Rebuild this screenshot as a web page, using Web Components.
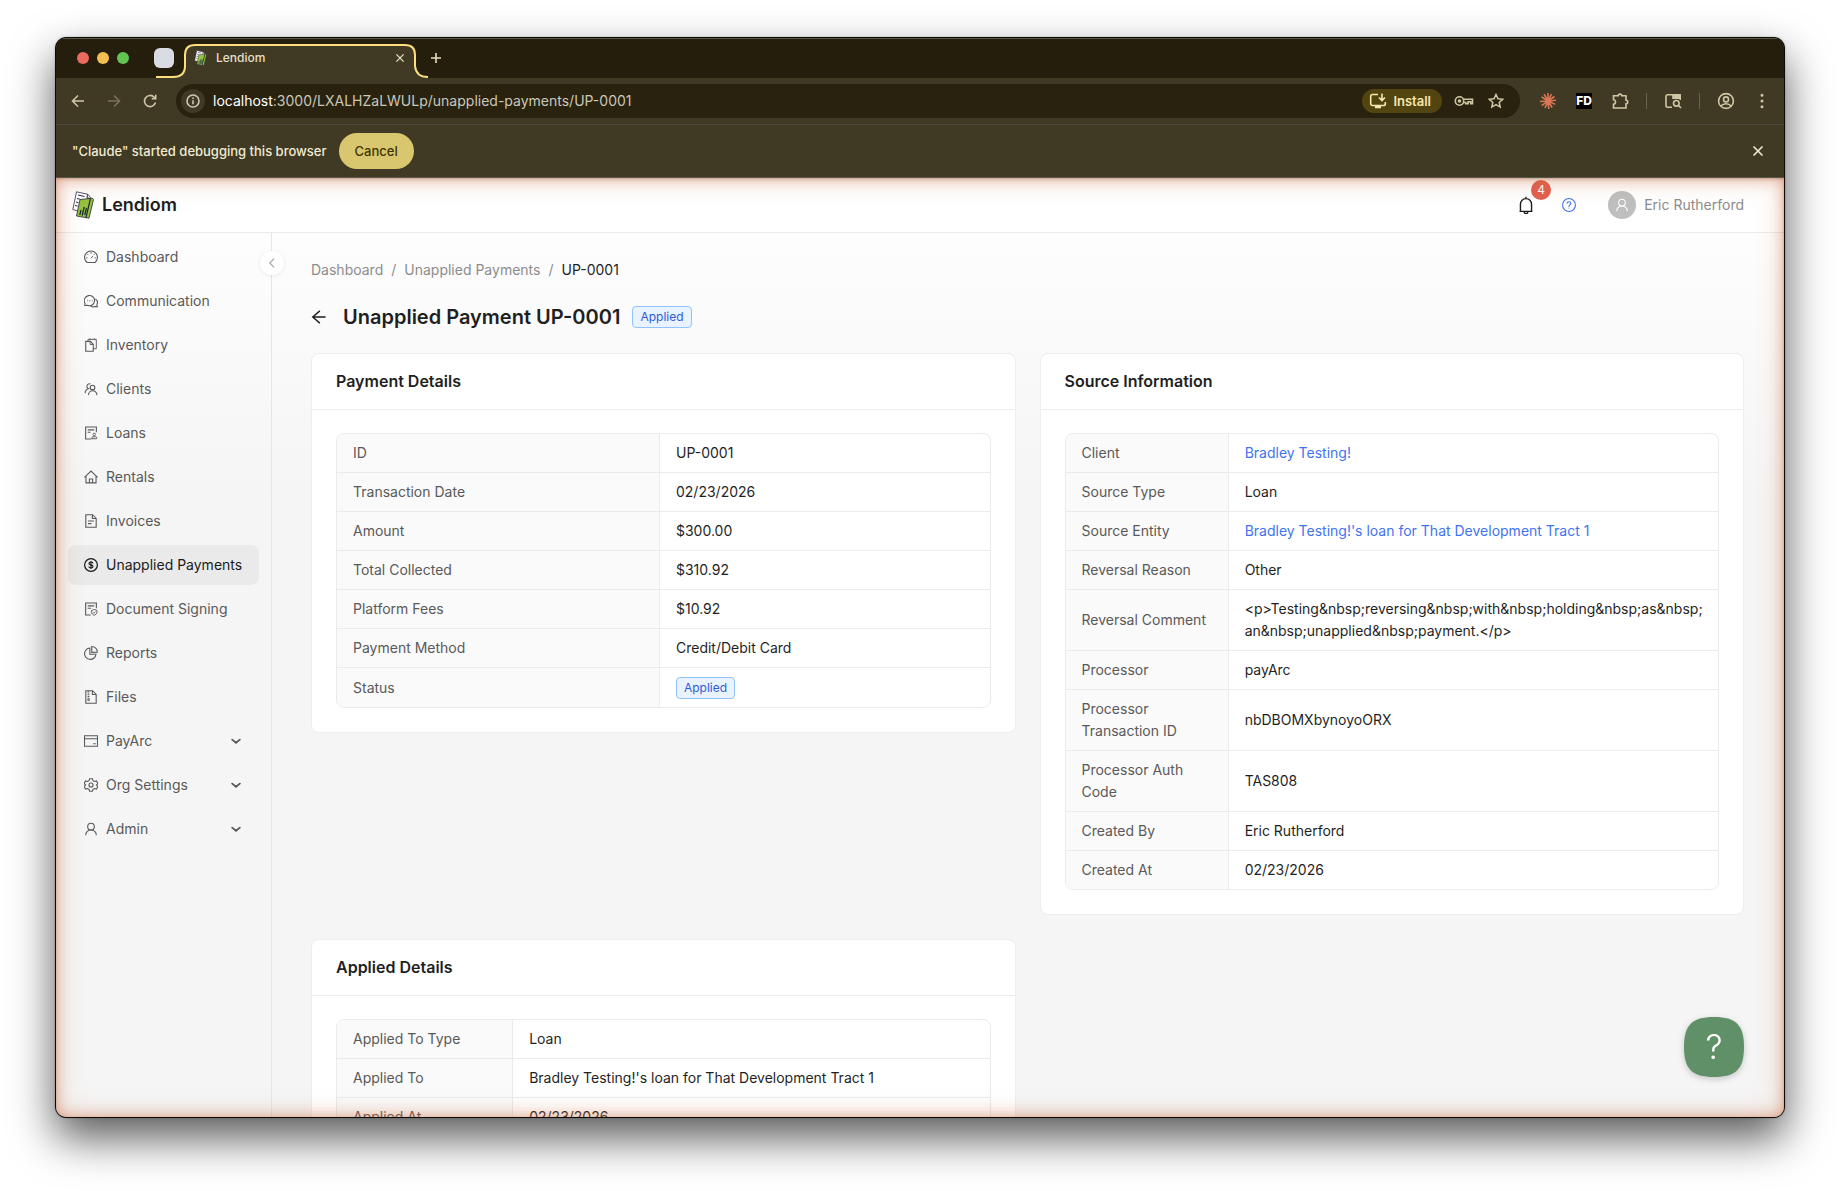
<!DOCTYPE html>
<html lang="en">
<head>
<meta charset="utf-8">
<title>Lendiom</title>
<style>
    body {
        margin: 0;
        background: #fff;
        font-family: Inter, "Liberation Sans", sans-serif;
        font-size: 14px;
        line-height: 22px;
        color: #1f1f1f;
    }
</style>
</head>
<body>
<browser-window>
    <tab-strip slot="chrome"></tab-strip>
    <nav-bar slot="chrome"></nav-bar>
    <info-bar slot="chrome">"Claude" started debugging this browser</info-bar>

    <app-header user="Eric Rutherford" count="4"></app-header>
    <app-layout>
        <side-nav slot="nav">
            <nav-item icon="dashboard">Dashboard</nav-item>
            <nav-item icon="comment">Communication</nav-item>
            <nav-item icon="inventory">Inventory</nav-item>
            <nav-item icon="team">Clients</nav-item>
            <nav-item icon="loans">Loans</nav-item>
            <nav-item icon="home">Rentals</nav-item>
            <nav-item icon="file">Invoices</nav-item>
            <nav-item icon="dollar" active>Unapplied Payments</nav-item>
            <nav-item icon="signing">Document Signing</nav-item>
            <nav-item icon="pie">Reports</nav-item>
            <nav-item icon="zip">Files</nav-item>
            <nav-item icon="card" expandable>PayArc</nav-item>
            <nav-item icon="setting" expandable>Org Settings</nav-item>
            <nav-item icon="user" expandable>Admin</nav-item>
        </side-nav>

        <page-heading>
            <a slot="crumb" href="#dashboard">Dashboard</a>
            <a slot="parent" href="#unapplied-payments">Unapplied Payments</a>
            <span slot="current">UP-0001</span>
            Unapplied Payment UP-0001
            <status-tag slot="tag">Applied</status-tag>
        </page-heading>

        <card-grid>
            <detail-card heading="Payment Details">
                <detail-table style="--label-width: 49.5%">
                    <div data-label="ID">UP-0001</div>
                    <div data-label="Transaction Date">02/23/2026</div>
                    <div data-label="Amount">$300.00</div>
                    <div data-label="Total Collected">$310.92</div>
                    <div data-label="Platform Fees">$10.92</div>
                    <div data-label="Payment Method">Credit/Debit Card</div>
                    <div data-label="Status"><status-tag>Applied</status-tag></div>
                </detail-table>
            </detail-card>
            <detail-card heading="Source Information">
                <detail-table style="--label-width: 25%">
                    <div data-label="Client"><text-link>Bradley Testing!</text-link></div>
                    <div data-label="Source Type">Loan</div>
                    <div data-label="Source Entity"><text-link>Bradley Testing!'s loan for That Development Tract 1</text-link></div>
                    <div data-label="Reversal Reason">Other</div>
                    <div data-label="Reversal Comment">&lt;p&gt;Testing&amp;nbsp;reversing&amp;nbsp;with&amp;nbsp;holding&amp;nbsp;as&amp;nbsp;<wbr>an&amp;nbsp;unapplied&amp;nbsp;payment.&lt;/p&gt;</div>
                    <div data-label="Processor">payArc</div>
                    <div data-label="Processor Transaction ID">nbDBOMXbynoyoORX</div>
                    <div data-label="Processor Auth Code">TAS808</div>
                    <div data-label="Created By">Eric Rutherford</div>
                    <div data-label="Created At">02/23/2026</div>
                </detail-table>
            </detail-card>
            <detail-card heading="Applied Details">
                <detail-table style="--label-width: 27%">
                    <div data-label="Applied To Type">Loan</div>
                    <div data-label="Applied To">Bradley Testing!'s loan for That Development Tract 1</div>
                    <div data-label="Applied At">02/23/2026</div>
                </detail-table>
            </detail-card>
        </card-grid>
    </app-layout>
    <help-button slot="overlay"></help-button>
</browser-window>

<script>
// Outline icons share a 1024 grid and are stroked with the current colour.
const LINE_ICONS = {
    dashboard: '<path d="M262 862A410 410 0 1 1 762 862Z"/><path d="M500 600L650 440M512 200v110M190 570h90M744 570h90M286 332l60 60M738 332l-50 50" stroke-width="60"/>',
    comment: '<path d="M110 800l20-140a330 330 0 1 1 150 130z"/><path d="M790 380a270 270 0 0 1 100 350l24 150-150-20a280 280 0 0 1-270-20"/><path d="M270 500h56M412 500h56M554 500h56" stroke-width="64"/>',
    inventory: '<path d="M176 280h290l190 190v440H176z"/><path d="M450 290v190h200" stroke-width="56"/><path d="M320 270V150h530v600H670M450 90v110M720 90v110" stroke-width="60"/>',
    team: '<circle cx="610" cy="420" r="150"/><path d="M350 900c0-150 110-280 260-280s270 130 290 280M470 190A160 160 0 1 0 350 490C220 530 140 640 136 780"/>',
    loans: '<path d="M540 900H168V128h688v330M300 310h420M300 460h180"/><circle cx="720" cy="600" r="80" stroke-width="56"/><path d="M570 880v-70q0-60 60-60h180q60 0 60 60v70z" stroke-width="60"/>',
    home: '<path d="M90 540L512 130l422 410M190 460v430h644V460M410 890V640h204v250"/>',
    file: '<path d="M180 110h430l234 234v570H180zM600 120v230h230M320 510h380M320 680h220"/>',
    dollar: '<circle cx="512" cy="512" r="408" stroke-width="80"/><path d="M640 410c-10-60-60-90-130-90-80 0-130 40-130 95 0 130 260 50 260 190 0 60-50 100-130 100s-135-35-140-100M510 250v520" stroke-width="72"/>',
    signing: '<path d="M500 900H168V128h688v330M300 310h420M300 460h220"/><path d="M720 540l170 60v120q0 120-170 200-170-80-170-200V600z" stroke-width="60"/><path d="M640 720l60 60 110-110" stroke-width="52"/>',
    pie: '<path d="M440 190A366 366 0 1 0 830 590H440z"/><path d="M560 100a360 360 0 0 1 360 360l-360 10z"/>',
    zip: '<path d="M180 110h430l234 234v570H180zM600 120v230h230"/><path d="M350 120v500" stroke-width="110" stroke-dasharray="60 50"/><path d="M310 640h100v110H310z" stroke-width="50"/>',
    card: '<path d="M96 180h832v664H96zM96 370h832M650 690h160"/>',
    setting: '<path d="M420 110h184l34 126 96 54 126-34 92 158-92 98 92 98-92 158-126-34-96 54-34 126H420l-34-126-96-54-126 34-92-158 92-98-92-98 92-158 126 34 96-54z"/><circle cx="512" cy="512" r="130"/>',
    user: '<circle cx="512" cy="360" r="212"/><path d="M172 905c0-190 150-333 340-333s340 143 340 333"/>',
    bell: '<path d="M190 830h644M236 820V470a276 276 0 0 1 552 0v350M512 100v90M420 850a92 92 0 0 0 184 0"/>',
    question: '<circle cx="512" cy="512" r="412"/><path d="M392 420c0-70 50-116 120-116s120 46 120 110c0 90-120 90-120 190v30M512 690v50"/>',
    back: '<path d="M880 512H150M560 170L160 512l400 342" stroke-width="78"/>',
    left: '<path d="M650 230L370 512l280 282" stroke-width="78"/>',
    down: '<path d="M170 390l342 280 342-280" stroke-width="160" stroke-linecap="round"/>'
};

// Toolbar icons use a 20 grid.
const CHROME_ICONS = {
    'arrow-left': '<path d="M16 10H5M10 4.500L4.500 10l5.500 5.500"/>',
    'arrow-right': '<path d="M4 10h11M10 4.500L15.500 10 10 15.500"/>',
    reload: '<path d="M15.500 11.500A5.600 5.600 0 1 1 14.200 6.200L15.500 7.500M15.700 3.800v4h-4"/>',
    info: '<circle cx="10" cy="10" r="6"/><path d="M10 9.300v4M10 6.500v1.400"/>',
    close: '<path d="M5.500 5.500l9 9M14.500 5.500l-9 9"/>',
    plus: '<path d="M10 5v10M5 10h10"/>',
    install: '<path d="M10 3.500H4.500a1.800 1.800 0 0 0-1.800 1.800v7.400a1.800 1.800 0 0 0 1.800 1.800h11a1.800 1.800 0 0 0 1.800-1.800V11M14 2.500v6.500M11 6.500l3 3 3-3"/><path d="M7 16h6" stroke-width="2.400"/>',
    key: '<circle cx="5.500" cy="10" r="4.200"/><circle cx="5.500" cy="10" r="1" fill="currentColor"/><path d="M9.500 8.200h9v4.600h-1.800v-2h-2.600v2h-2.200v-1.300H9.500"/>',
    star: '<path d="M10 3.500l2 4.300 4.700.5-3.500 3.200 1 4.600-4.200-2.400-4.200 2.400 1-4.600-3.500-3.200 4.700-.5z" stroke-width="1.500"/>',
    puzzle: '<path d="M3.500 4.800h4.700c0-2.300 3.600-2.300 3.600 0H16v4.400c2.300 0 2.300 3.600 0 3.600V17H3.500v-3.700c2.700 0 2.700-4.500 0-4.500z"/>',
    tabsearch: '<path d="M9 16.200H4.500a1.500 1.500 0 0 1-1.500-1.500V5.300a1.500 1.500 0 0 1 1.500-1.500h12.700V9M10 3.800v3.400h7"/><path d="M11 4h6v3h-6z" fill="currentColor"/><circle cx="13.300" cy="12.300" r="2.800"/><path d="M15.400 14.400l2.600 2.600"/>',
    profile: '<circle cx="10" cy="10" r="7.400"/><circle cx="10" cy="8.400" r="2.500"/><path d="M5 15c2.200-3 7.800-3 10 0"/>',
    dots: '<path d="M10 4.200v.01M10 10v.01M10 15.800v.01" stroke-width="3" stroke-linecap="round"/>',
    burst: '<path d="M10 10V2M10 10l3.500-7M10 10l6.500-4.500M10 10l8-.8M10 10l7.200 3.400M10 10l4.200 6.500M10 10l.8 8M10 10l-3 7M10 10l-6.300 4.600M10 10l-8 .5M10 10L3.500 5.800M10 10L6 3.200"/>'
};

class AppIcon extends HTMLElement {
    connectedCallback() {
        const name = this.getAttribute('name');
        const line = name in LINE_ICONS;
        this.attachShadow({ mode: 'open' }).innerHTML = `
            <style>
                :host { display: inline-flex; flex: none; width: 14px; height: 14px; }
                svg { width: 100%; height: 100%; fill: none; stroke: currentColor; }
            </style>
            <svg viewBox="${line ? '64 64 896 896' : '0 0 20 20'}" stroke-width="${line ? 70 : 1.6}" aria-hidden="true">
                ${line ? LINE_ICONS[name] : CHROME_ICONS[name]}
            </svg>`;
    }
}

class LendiomLogo extends HTMLElement {
    connectedCallback() {
        this.attachShadow({ mode: 'open' }).innerHTML = `
            <style>
                :host { display: inline-flex; flex: none; width: 22px; height: 28px; }
                svg { width: 100%; height: 100%; }
            </style>
            <svg viewBox="0 0 22 28" aria-hidden="true" stroke-linejoin="round">
                <path d="M4.500 0.800L16 3.300l2.500 3.400-3.500 15.500L0.800 18.600z" fill="#fff" stroke="#2b2a4c" stroke-width="0.800"/>
                <path d="M6 4l6.500 1.500M5 7.500l3 .7M4 11l2.500.6M3 14.500l2.500.6M15.500 3.500L15 7l4 .5" fill="none" stroke="#2b2a4c"/>
                <path d="M8 8.500L20.500 7.200l1 1.500-4.500 18.500L4.500 25z" fill="#96c23d" stroke="#1f2a3c" stroke-width="0.800"/>
                <path d="M17.800 7.600l1.200.2-4.400 18.900-1.200-.3z" fill="#1f2a3c"/>
                <path d="M9 19l-1.200 5M12.200 16l-2 8.500M14.500 17l-1.800 7" stroke="#1f2a3c" stroke-width="1.300"/>
            </svg>`;
    }
}

class BrowserWindow extends HTMLElement {
    connectedCallback() {
        this.attachShadow({ mode: 'open' }).innerHTML = `
            <style>
                :host {
                    display: flex;
                    box-sizing: border-box;
                    height: 100vh;
                    padding: 37px 55px 73px;
                    overflow: hidden;
                }
                .frame {
                    flex: 1;
                    min-width: 0;
                    display: flex;
                    flex-direction: column;
                    border: 1px solid #0c0b08;
                    border-radius: 11px;
                    overflow: hidden;
                    box-shadow: 0 20px 44px rgba(0,0,0,0.65), 0 0 2px rgba(0,0,0,0.3);
                    background: #403a25;
                }
                .page {
                    position: relative;
                    flex: 1;
                    min-height: 0;
                    display: flex;
                    flex-direction: column;
                    background: linear-gradient(#fff, #fdfdfd 60px, #f5f5f5 320px);
                }
                /* glow around the page while it is being debugged */
                .glow {
                    position: absolute;
                    inset: 0;
                    pointer-events: none;
                    border-radius: 0 0 10px 10px;
                    box-shadow: inset 0 0 15px rgba(205,105,60,0.55), inset 0 0 30px rgba(205,105,60,0.2), inset 0 1px 3px rgba(60,40,30,0.3);
                }
            </style>
            <div class="frame">
                <slot name="chrome"></slot>
                <div class="page">
                    <slot></slot>
                    <div class="glow"></div>
                    <slot name="overlay"></slot>
                </div>
            </div>`;
    }
}

class TabStrip extends HTMLElement {
    connectedCallback() {
        this.attachShadow({ mode: 'open' }).innerHTML = `
            <style>
                :host {
                    display: flex;
                    align-items: center;
                    height: 40px;
                    padding-left: 21px;
                    background: #251e0c;
                    color: #e6dfc4;
                    box-shadow: inset 0 1px #5a564a;
                }
                .lights { display: flex; gap: 8px; }
                .lights i { width: 12px; height: 12px; border-radius: 50%; background: #ed6a5e; }
                .lights i:nth-child(2) { background: #f4bf4f; }
                .lights i:nth-child(3) { background: #61c554; }
                .pinned { width: 20px; height: 20px; margin-left: 25px; border-radius: 6px; background: #dadce4; }
                .tab {
                    position: relative;
                    display: flex;
                    align-items: center;
                    box-sizing: border-box;
                    width: 232px;
                    height: 40px;
                    margin-left: 10px;
                    padding: 0 8px 0 10px;
                    font-size: 12px;
                }
                .outline { position: absolute; left: -28px; top: 6px; width: 272px; height: 34px; }
                .tab > :not(.outline) { position: relative; }
                lendiom-logo { width: 13px; height: 16px; }
                .title { flex: 1; margin-left: 9px; font-weight: 500; }
                button { display: flex; padding: 0; border: 0; background: none; color: inherit; }
                app-icon { width: 16px; height: 16px; }
                .add { margin-left: 10px; }
                .add app-icon { width: 20px; height: 20px; }
            </style>
            <div class="lights"><i></i><i></i><i></i></div>
            <div class="pinned"></div>
            <div class="tab">
                <svg class="outline" viewBox="0 0 272 34" fill="none">
                    <path d="M16 34C24 33 29 30 29 22V11Q29 1 39 1H249Q259 1 259 11V22Q260 33 272 34Z" fill="#403a25"/>
                    <path d="M0 33H17Q29 33 29 22V11Q29 1 39 1H249Q259 1 259 11V22Q260 33 272 33" stroke="#fbdf7d" stroke-width="2"/>
                </svg>
                <lendiom-logo></lendiom-logo>
                <span class="title">Lendiom</span>
                <button aria-label="Close tab"><app-icon name="close"></app-icon></button>
            </div>
            <button class="add" aria-label="New tab"><app-icon name="plus"></app-icon></button>`;
    }
}

class NavBar extends HTMLElement {
    connectedCallback() {
        this.attachShadow({ mode: 'open' }).innerHTML = `
            <style>
                :host {
                    display: flex;
                    align-items: center;
                    height: 46px;
                    padding: 0 12px;
                    background: #403a25;
                    border-bottom: 1px solid #4b4a44;
                    color: #cfc7a3;
                }
                button { display: flex; align-items: center; padding: 0; border: 0; background: none; color: inherit; font: inherit; }
                app-icon { width: 20px; height: 20px; }
                .history { display: flex; gap: 16px; margin-right: 16px; }
                .history :disabled { opacity: 0.4; }
                .omnibox {
                    flex: 1;
                    display: flex;
                    align-items: center;
                    gap: 12px;
                    height: 34px;
                    padding: 0 14px 0 5px;
                    border-radius: 17px;
                    background: #29220f;
                }
                .address { flex: 1; display: flex; align-items: center; gap: 8px; color: #cbc7b9; }
                .address b { font-weight: 400; color: #fff; }
                .info { justify-content: center; width: 24px; height: 24px; border-radius: 50%; background: #403a25; }
                .install {
                    gap: 5px;
                    height: 24px;
                    padding: 0 11px 0 6px;
                    border-radius: 12px;
                    background: #524510;
                    color: #f7e7ac;
                    font-size: 13px;
                    font-weight: 600;
                }
                .tools { display: flex; align-items: center; gap: 16px; margin-left: 18px; }
                .burst { color: #d97757; }
                .fd { justify-content: center; width: 16px; margin: 0 2px; background: #000; color: #fff; font-size: 12px; line-height: 16px; font-weight: 800; }
                .tools i { width: 1px; height: 16px; background: #6a6448; }
            </style>
            <div class="history">
                <button aria-label="Back"><app-icon name="arrow-left"></app-icon></button>
                <button aria-label="Forward" disabled><app-icon name="arrow-right"></app-icon></button>
                <button aria-label="Reload"><app-icon name="reload"></app-icon></button>
            </div>
            <div class="omnibox">
                <div class="address">
                    <button class="info" aria-label="Site information"><app-icon name="info"></app-icon></button>
                    <span><b>localhost</b>:3000/LXALHZaLWULp/unapplied-payments/UP-0001</span>
                </div>
                <button class="install"><app-icon name="install"></app-icon>Install</button>
                <button aria-label="Passwords"><app-icon name="key"></app-icon></button>
                <button aria-label="Bookmark"><app-icon name="star"></app-icon></button>
            </div>
            <div class="tools">
                <button class="burst" aria-label="Claude"><app-icon name="burst"></app-icon></button>
                <button class="fd">FD</button>
                <button aria-label="Extensions"><app-icon name="puzzle"></app-icon></button>
                <i></i>
                <button aria-label="Search tabs"><app-icon name="tabsearch"></app-icon></button>
                <i></i>
                <button aria-label="Profile"><app-icon name="profile"></app-icon></button>
                <button aria-label="Menu"><app-icon name="dots"></app-icon></button>
            </div>`;
    }
}

class InfoBar extends HTMLElement {
    connectedCallback() {
        this.attachShadow({ mode: 'open' }).innerHTML = `
            <style>
                :host {
                    display: flex;
                    align-items: center;
                    height: 52px;
                    padding: 0 16px;
                    background: #403a25;
                    border-bottom: 1px solid #5b564a;
                    color: #f0ead2;
                    font-size: 13px;
                    font-weight: 500;
                }
                button { padding: 0; border: 0; background: none; color: inherit; font: inherit; }
                .cancel { height: 36px; margin-left: 12px; padding: 0 16px; border-radius: 18px; background: #d9c76f; color: #403500; }
                .close { display: flex; margin-left: auto; }
                .close app-icon { width: 20px; height: 20px; }
            </style>
            <span><slot></slot></span>
            <button class="cancel">Cancel</button>
            <button class="close" aria-label="Close"><app-icon name="close"></app-icon></button>`;
    }
}

class AppHeader extends HTMLElement {
    connectedCallback() {
        this.attachShadow({ mode: 'open' }).innerHTML = `
            <style>
                :host {
                    display: flex;
                    align-items: center;
                    height: 54px;
                    padding: 0 40px 0 16px;
                    background: #fff;
                    border-bottom: 1px solid #ebebeb;
                }
                .brand { display: flex; align-items: center; gap: 8px; font-size: 18px; font-weight: 600; }
                .actions { display: flex; align-items: center; margin-left: auto; }
                button { position: relative; display: flex; align-items: center; padding: 0; border: 0; background: none; color: inherit; font: inherit; }
                .bell app-icon { width: 18px; height: 18px; }
                .badge {
                    position: absolute;
                    left: 14px;
                    top: -16px;
                    width: 20px;
                    border-radius: 10px;
                    background: #e2604f;
                    color: #fff;
                    font-size: 12px;
                    line-height: 20px;
                    text-align: center;
                }
                .help { margin: 0 32px 0 27px; color: #3f74f0; }
                .user { gap: 8px; color: #8c8c8c; }
                .avatar { display: flex; align-items: center; justify-content: center; width: 28px; height: 28px; border-radius: 50%; background: #bfbfbf; color: #fff; }
            </style>
            <div class="brand"><lendiom-logo></lendiom-logo>Lendiom</div>
            <div class="actions">
                <button class="bell" aria-label="Notifications">
                    <app-icon name="bell"></app-icon>
                    <span class="badge">${this.getAttribute('count')}</span>
                </button>
                <button class="help" aria-label="Help"><app-icon name="question"></app-icon></button>
                <button class="user"><span class="avatar"><app-icon name="user"></app-icon></span>${this.getAttribute('user')}</button>
            </div>`;
    }
}

class AppLayout extends HTMLElement {
    connectedCallback() {
        this.attachShadow({ mode: 'open' }).innerHTML = `
            <style>
                :host { display: flex; flex: 1; min-height: 0; }
                main { flex: 1; min-width: 0; padding: 26px 40px 24px 39px; overflow: auto; scrollbar-width: none; }
            </style>
            <slot name="nav"></slot>
            <main><slot></slot></main>`;
    }
}

class SideNav extends HTMLElement {
    connectedCallback() {
        this.attachShadow({ mode: 'open' }).innerHTML = `
            <style>
                :host { position: relative; display: block; flex: none; width: 191px; padding: 4px 12px; border-right: 1px solid #e6e6e6; }
                nav { display: flex; flex-direction: column; gap: 4px; }
                .toggle {
                    position: absolute;
                    right: -13px;
                    top: 18px;
                    display: flex;
                    align-items: center;
                    justify-content: center;
                    width: 24px;
                    height: 24px;
                    padding: 0;
                    border: 0;
                    border-radius: 50%;
                    background: #fff;
                    color: #a6a6a6;
                    box-shadow: 0 1px 4px rgba(0,0,0,0.08);
                }
            </style>
            <nav><slot></slot></nav>
            <button class="toggle" aria-label="Collapse menu"><app-icon name="left"></app-icon></button>`;
    }
}

class NavItem extends HTMLElement {
    connectedCallback() {
        const expandable = this.hasAttribute('expandable');
        this.attachShadow({ mode: 'open' }).innerHTML = `
            <style>
                :host { display: block; }
                a {
                    display: flex;
                    align-items: center;
                    gap: 8px;
                    height: 40px;
                    padding: 0 18px 0 16px;
                    border-radius: 8px;
                    color: #595959;
                    text-decoration: none;
                    white-space: nowrap;
                }
                :host([active]) a { background: #eaeaea; color: #1a1a1a; }
                .arrow { width: 10px; height: 10px; margin-left: auto; }
            </style>
            <a href="#${this.getAttribute('icon')}">
                <app-icon name="${this.getAttribute('icon')}"></app-icon>
                <span><slot></slot></span>
                ${expandable ? '<app-icon class="arrow" name="down"></app-icon>' : ''}
            </a>`;
    }
}

class PageHeading extends HTMLElement {
    connectedCallback() {
        this.attachShadow({ mode: 'open' }).innerHTML = `
            <style>
                :host { display: block; }
                .crumbs { display: flex; gap: 8px; color: #8c8c8c; }
                ::slotted(a) { color: inherit; text-decoration: none; }
                ::slotted([slot="current"]) { color: #1f1f1f; }
                .row { display: flex; align-items: center; margin: 20px 0; }
                .back { display: flex; margin-right: 16px; padding: 0; border: 0; background: none; color: #1f1f1f; }
                .back app-icon { width: 16px; height: 16px; }
                h1 { margin: 0 12px 0 0; font-size: 20px; line-height: 32px; font-weight: 600; }
            </style>
            <div class="crumbs">
                <slot name="crumb"></slot><span>/</span><slot name="parent"></slot><span>/</span><slot name="current"></slot>
            </div>
            <div class="row">
                <button class="back" aria-label="Back"><app-icon name="back"></app-icon></button>
                <h1><slot></slot></h1>
                <slot name="tag"></slot>
            </div>`;
    }
}

class StatusTag extends HTMLElement {
    connectedCallback() {
        this.attachShadow({ mode: 'open' }).innerHTML = `
            <style>
                :host {
                    display: inline-block;
                    padding: 0 7px;
                    border: 1px solid #91c3fd;
                    border-radius: 4px;
                    background: #e8f3ff;
                    color: #2f5bd6;
                    font-size: 12px;
                    line-height: 20px;
                }
            </style>
            <slot></slot>`;
    }
}

class TextLink extends HTMLElement {
    connectedCallback() {
        this.attachShadow({ mode: 'open' }).innerHTML = `
            <style>
                a { color: #3f74f0; text-decoration: none; }
            </style>
            <a href="#entity"><slot></slot></a>`;
    }
}

class CardGrid extends HTMLElement {
    connectedCallback() {
        this.attachShadow({ mode: 'open' }).innerHTML = `
            <style>
                :host { display: grid; grid-template-columns: repeat(2, minmax(0, 1fr)); gap: 24px; align-items: start; }
            </style>
            <slot></slot>`;
    }
}

class DetailCard extends HTMLElement {
    connectedCallback() {
        this.attachShadow({ mode: 'open' }).innerHTML = `
            <style>
                :host { display: block; border: 1px solid #eee; border-radius: 8px; background: #fff; }
                h2 { margin: 0; padding: 0 24px; border-bottom: 1px solid #ebebeb; font-size: 16px; line-height: 55px; font-weight: 600; }
                .body { padding: 23px 24px 24px; }
            </style>
            <h2>${this.getAttribute('heading')}</h2>
            <div class="body"><slot></slot></div>`;
    }
}

// Each child with a data-label becomes one row of the table.
class DetailTable extends HTMLElement {
    connectedCallback() {
        const rows = [...this.children].map((child, i) => {
            child.slot = `row-${i}`;
            return `<tr><th scope="row">${child.dataset.label}</th><td><slot name="row-${i}"></slot></td></tr>`;
        });
        this.attachShadow({ mode: 'open' }).innerHTML = `
            <style>
                :host { display: block; border: 1px solid #ebebeb; border-radius: 8px; overflow: hidden; }
                table { width: 100%; table-layout: fixed; border-collapse: separate; border-spacing: 0; }
                th, td { padding: 8px 16px; text-align: left; vertical-align: middle; border-bottom: 1px solid #ebebeb; }
                th { box-sizing: border-box; width: var(--label-width); border-right: 1px solid #ebebeb; background: #fafafa; color: #595959; font-weight: 400; }
                tr:last-child > * { border-bottom: 0; }
            </style>
            <table><tbody>${rows.join('')}</tbody></table>`;
    }
}

class HelpButton extends HTMLElement {
    connectedCallback() {
        this.attachShadow({ mode: 'open' }).innerHTML = `
            <style>
                :host { position: absolute; right: 40px; bottom: 40px; width: 60px; height: 60px; }
                button {
                    position: relative;
                    width: 100%;
                    height: 100%;
                    padding: 0;
                    border: 0;
                    background: none;
                    color: #fff;
                    font: 300 34px/60px Inter, sans-serif;
                    filter: drop-shadow(0 2px 3px rgba(0,0,0,0.2));
                }
                svg { position: absolute; inset: 0; }
                span { position: relative; }
            </style>
            <button aria-label="Open help">
                <svg width="60" height="60" viewBox="0 0 60 60"><path d="M30 0C52 0 60 8 60 30S52 60 30 60 0 52 0 30 8 0 30 0z" fill="#5f9068"/></svg>
                <span>?</span>
            </button>`;
    }
}

customElements.define('app-icon', AppIcon);
customElements.define('lendiom-logo', LendiomLogo);
customElements.define('browser-window', BrowserWindow);
customElements.define('tab-strip', TabStrip);
customElements.define('nav-bar', NavBar);
customElements.define('info-bar', InfoBar);
customElements.define('app-header', AppHeader);
customElements.define('app-layout', AppLayout);
customElements.define('side-nav', SideNav);
customElements.define('nav-item', NavItem);
customElements.define('page-heading', PageHeading);
customElements.define('status-tag', StatusTag);
customElements.define('text-link', TextLink);
customElements.define('card-grid', CardGrid);
customElements.define('detail-card', DetailCard);
customElements.define('detail-table', DetailTable);
customElements.define('help-button', HelpButton);
</script>
</body>
</html>
